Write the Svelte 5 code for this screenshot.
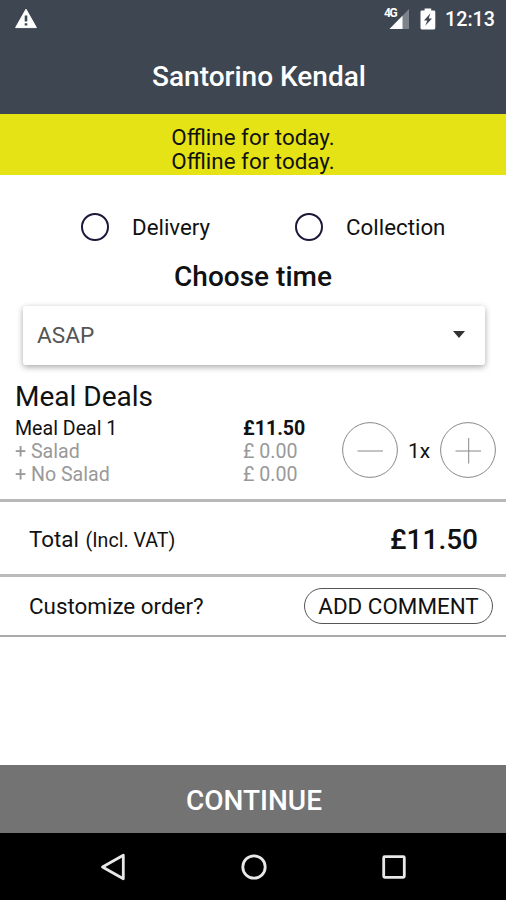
<script>
    let orderType = "";
    let quantity = 1;

    const notices = ["Offline for today.", "Offline for today."];
    const orderTypes = ["Delivery", "Collection"];
    const lines = [
        { name: "Meal Deal 1", price: "£11.50", main: true },
        { name: "+ Salad", price: "£ 0.00" },
        { name: "+ No Salad", price: "£ 0.00" },
    ];
</script>

<div class="screen">
    <div class="status">
        <svg class="warning" width="24" height="22" viewBox="0 0 24 22">
            <path d="M12 1.2 22.4 19.6H1.6Z" fill="#fff" stroke="#fff" stroke-linejoin="round" />
            <path d="M12 7.6v6M12 15.2v2.4" stroke="#3e4651" stroke-width="2.6" />
        </svg>
        <div class="signal">
            <svg width="26" height="24" viewBox="0 0 26 24">
                <path d="M25 2V22H5.5Z" fill="#7d838a" />
                <path d="M18.5 8.7V22H5.5Z" fill="#fff" />
            </svg>
            <span>4G</span>
        </div>
        <svg class="battery" width="16" height="22" viewBox="0 0 16 22">
            <path d="M1.8 2.4H4.6V.4h6.6v2H14a1.3 1.3 0 0 1 1.3 1.3v16.4a1.3 1.3 0 0 1-1.3 1.3H1.8A1.3 1.3 0 0 1 .5 20.1V3.7A1.3 1.3 0 0 1 1.8 2.4Z" fill="#fff" />
            <path d="M10.4 5.2 4 12.6H7.3L5.3 17.8 12 10.4H8.7Z" fill="#3e4651" />
        </svg>
        <span class="clock">12:13</span>
    </div>
    <header>
        <h1>Santorino Kendal</h1>
    </header>

    <div class="notice">
        {#each notices as notice}
            <p>{notice}</p>
        {/each}
    </div>

    <div class="types">
        {#each orderTypes as type}
            <button class="type" on:click={() => (orderType = type)}>
                <span class="radio" class:checked={orderType === type}></span>
                {type}
            </button>
        {/each}
    </div>

    <h2 class="choose">Choose time</h2>
    <button class="select">
        <span>ASAP</span>
        <svg width="14" height="11" viewBox="0 0 14 11">
            <path d="M1 1H13L7 8Z" fill="#333" />
        </svg>
    </button>

    <section class="deals">
        <h2>Meal Deals</h2>
        <div class="deal">
            <div class="lines">
                {#each lines as line}
                    <div class="line" class:main={line.main}>
                        <span class="name">{line.name}</span>
                        <span class="price">{line.price}</span>
                    </div>
                {/each}
            </div>
            <div class="stepper">
                <button aria-label="Less" on:click={() => (quantity = Math.max(1, quantity - 1))}>
                    <svg width="56" height="56" viewBox="0 0 56 56">
                        <circle cx="28" cy="28" r="27.4" />
                        <path d="M15.5 29H41" />
                    </svg>
                </button>
                <span>{quantity}x</span>
                <button aria-label="More" on:click={() => (quantity += 1)}>
                    <svg width="56" height="56" viewBox="0 0 56 56">
                        <circle cx="28" cy="28" r="27.4" />
                        <path d="M15.5 29H41M28.7 16V41.5" />
                    </svg>
                </button>
            </div>
        </div>
    </section>

    <div class="row total">
        <p>Total <small>(Incl. VAT)</small></p>
        <strong>£11.50</strong>
    </div>
    <div class="row customize">
        <p>Customize order?</p>
        <button class="comment">ADD COMMENT</button>
    </div>

    <button class="continue">CONTINUE</button>

    <nav>
        <svg width="28" height="28" viewBox="0 0 28 28">
            <path d="M23.3 2.2V25.8L2.5 14Z" />
        </svg>
        <svg width="28" height="28" viewBox="0 0 28 28">
            <circle cx="14" cy="14" r="11.2" />
        </svg>
        <svg width="28" height="28" viewBox="0 0 28 28">
            <rect x="3.7" y="3.7" width="20.6" height="20.6" rx="1" />
        </svg>
    </nav>
</div>

<style>
    :global(body) {
        margin: 0;
    }
    .screen {
        display: flex;
        flex-direction: column;
        width: 506px;
        height: 900px;
        overflow: hidden;
        background-color: #fff;
        color: #111;
        font-family: Roboto, "Liberation Sans", sans-serif;
    }
    h1,
    h2,
    p {
        margin: 0;
        font-weight: 500;
    }
    p {
        font-weight: 400;
    }
    button {
        padding: 0;
        border: none;
        background: none;
        color: inherit;
        font: inherit;
        cursor: pointer;
    }

    .status {
        display: flex;
        align-items: center;
        box-sizing: border-box;
        height: 38px;
        padding: 0 11px 0 14px;
        background-color: #3e4651;
        color: #fff;
    }
    .signal {
        position: relative;
        height: 24px;
        margin-left: auto;
    }
    .signal svg {
        display: block;
    }
    .signal span {
        position: absolute;
        top: 1px;
        left: 0;
        font-size: 12px;
        line-height: 11px;
        font-weight: 700;
        letter-spacing: -1.5px;
    }
    .battery {
        margin-left: 10px;
    }
    .clock {
        margin-left: 9px;
        font-size: 19.7px;
        font-weight: 500;
    }
    header {
        display: flex;
        align-items: center;
        justify-content: center;
        height: 76px;
        padding-left: 12px;
        background-color: #3e4651;
        color: #fff;
    }
    h1 {
        font-size: 28px;
    }

    .notice {
        box-sizing: border-box;
        height: 61px;
        padding-top: 11px;
        background-color: #e5e316;
        font-size: 22.4px;
        line-height: 24px;
        text-align: center;
    }

    .types {
        display: flex;
        gap: 85px;
        box-sizing: border-box;
        height: 76px;
        padding: 14px 0 0 81px;
        font-size: 22.3px;
    }
    .type {
        display: flex;
        align-items: center;
        gap: 23px;
        height: 76px;
    }
    .radio {
        box-sizing: border-box;
        width: 28px;
        height: 28px;
        border: 2px solid #1b1839;
        border-radius: 50%;
    }
    .radio.checked {
        box-shadow: inset 0 0 0 5px #fff, inset 0 0 0 14px #1b1839;
    }

    .choose {
        height: 55px;
        font-size: 28px;
        line-height: 51px;
        text-align: center;
    }
    .select {
        display: flex;
        align-items: center;
        justify-content: space-between;
        height: 59px;
        margin: 0 21px 0 23px;
        padding: 0 19px 0 14px;
        border-radius: 3px;
        box-shadow: 0 2px 6px rgba(0, 0, 0, 0.35);
        color: #555;
        font-size: 22.6px;
    }

    .deals {
        box-sizing: border-box;
        height: 137px;
        padding: 14px 10px 0 15px;
        border-bottom: 3px solid #b8b8b8;
    }
    .deals h2 {
        font-size: 28px;
        line-height: 36px;
        font-weight: 400;
    }
    .deal {
        display: flex;
        justify-content: space-between;
    }
    .lines {
        padding-top: 2px;
    }
    .line {
        display: flex;
        color: #999;
        font-size: 19.6px;
        line-height: 23px;
    }
    .line.main {
        color: #111;
    }
    .name {
        width: 228px;
    }
    .main .price {
        font-weight: 700;
    }
    .stepper {
        display: flex;
        align-items: center;
        justify-content: space-between;
        width: 154px;
        height: 70px;
        font-size: 21px;
    }
    .stepper span {
        padding-top: 2px;
    }
    .stepper button {
        height: 56px;
    }
    .stepper svg {
        display: block;
        fill: none;
        stroke: #888;
    }

    .row {
        display: flex;
        align-items: center;
        justify-content: space-between;
        box-sizing: border-box;
        height: 75px;
        padding: 0 28px 0 29px;
        border-bottom: 3px solid #bbb;
        font-size: 22.4px;
    }
    .row small {
        margin-left: 1px;
        font-size: 19.6px;
    }
    .row strong {
        font-size: 28px;
        font-weight: 500;
    }
    .total {
        padding-top: 2px;
    }
    .customize {
        height: 60px;
        padding-right: 13px;
        border-bottom: 2px solid #aaa;
    }
    .comment {
        box-sizing: border-box;
        width: 189px;
        height: 36px;
        border: 1px solid #555;
        border-radius: 18px;
    }

    .continue {
        height: 68px;
        margin-top: auto;
        padding: 2px 0 0 2px;
        background-color: #737373;
        color: #fff;
        font-size: 28px;
        font-weight: 500;
    }
    nav {
        display: flex;
        align-items: center;
        justify-content: center;
        gap: 112px;
        height: 67px;
        padding-left: 2px;
        background-color: #000;
    }
    nav svg {
        fill: none;
        stroke: #e8e8e8;
        stroke-width: 2.8;
        stroke-linejoin: round;
    }
</style>
